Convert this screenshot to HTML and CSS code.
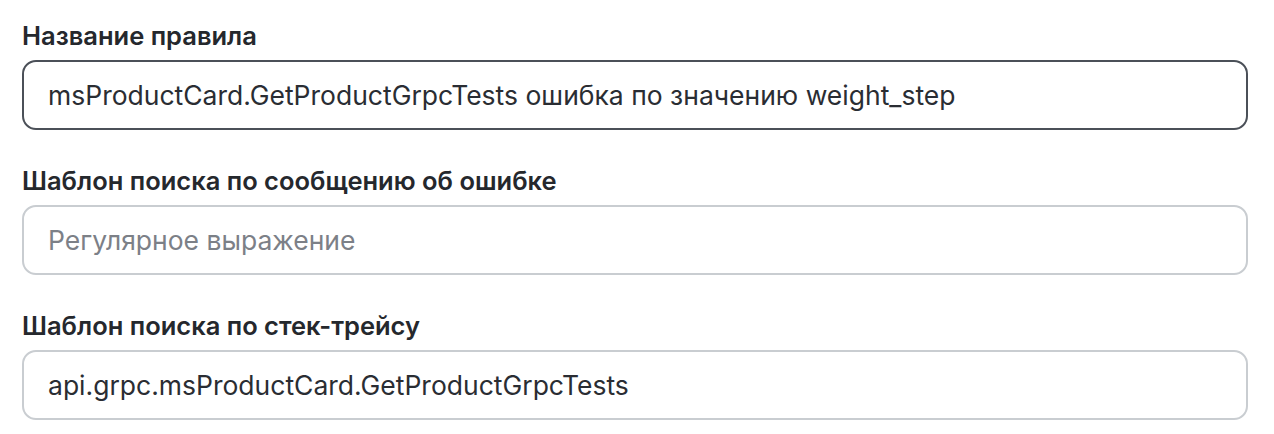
FILE: index.html
```html
<!DOCTYPE html>
<html>
	<head>
		<title>Правило</title>
		<meta charset="UTF-8">
		<link rel="stylesheet" href="styles.css">
	</head>
	<body class="page">
		<div class="form">
			<div class="field">
				<label class="field_label" for="ruleName">Название правила</label>
				<input class="field_input field_input--active" id="ruleName" type="text" value="msProductCard.GetProductGrpcTests ошибка по значению weight_step">
			</div>
			<div class="field">
				<label class="field_label" for="msgPattern">Шаблон поиска по сообщению об ошибке</label>
				<input class="field_input" id="msgPattern" type="text" placeholder="Регулярное выражение">
			</div>
			<div class="field">
				<label class="field_label" for="tracePattern">Шаблон поиска по стек-трейсу</label>
				<input class="field_input" id="tracePattern" type="text" value="api.grpc.msProductCard.GetProductGrpcTests">
			</div>
		</div>
	</body>
</html>
```
FILE: styles.css
```css
html, body {
	height: 100%;
}
.page {
	margin: 0;
	background: #ffffff;
	font-family: Inter, "Noto Sans", sans-serif;
	color: #25282d;
}
.form {
	padding: 20px 26px 0 22px;
	display: flex;
	flex-direction: column;
	gap: 35px;
}
.field {
	display: flex;
	flex-direction: column;
	gap: 8px;
}
.field_label {
	font-size: 25.5px;
	font-weight: 600;
	line-height: 32px;
	color: #25282d;
}
.field_input {
	box-sizing: border-box;
	width: 100%;
	height: 70px;
	padding: 0 24px;
	border: 2px solid #c9cdd1;
	border-radius: 14px;
	font-family: inherit;
	font-size: 26.5px;
	color: #2a2d33;
	background: #ffffff;
	outline: none;
}
.field_input::placeholder {
	color: #7c8087;
}
.field_input--active {
	border-color: #4b5058;
}
```
